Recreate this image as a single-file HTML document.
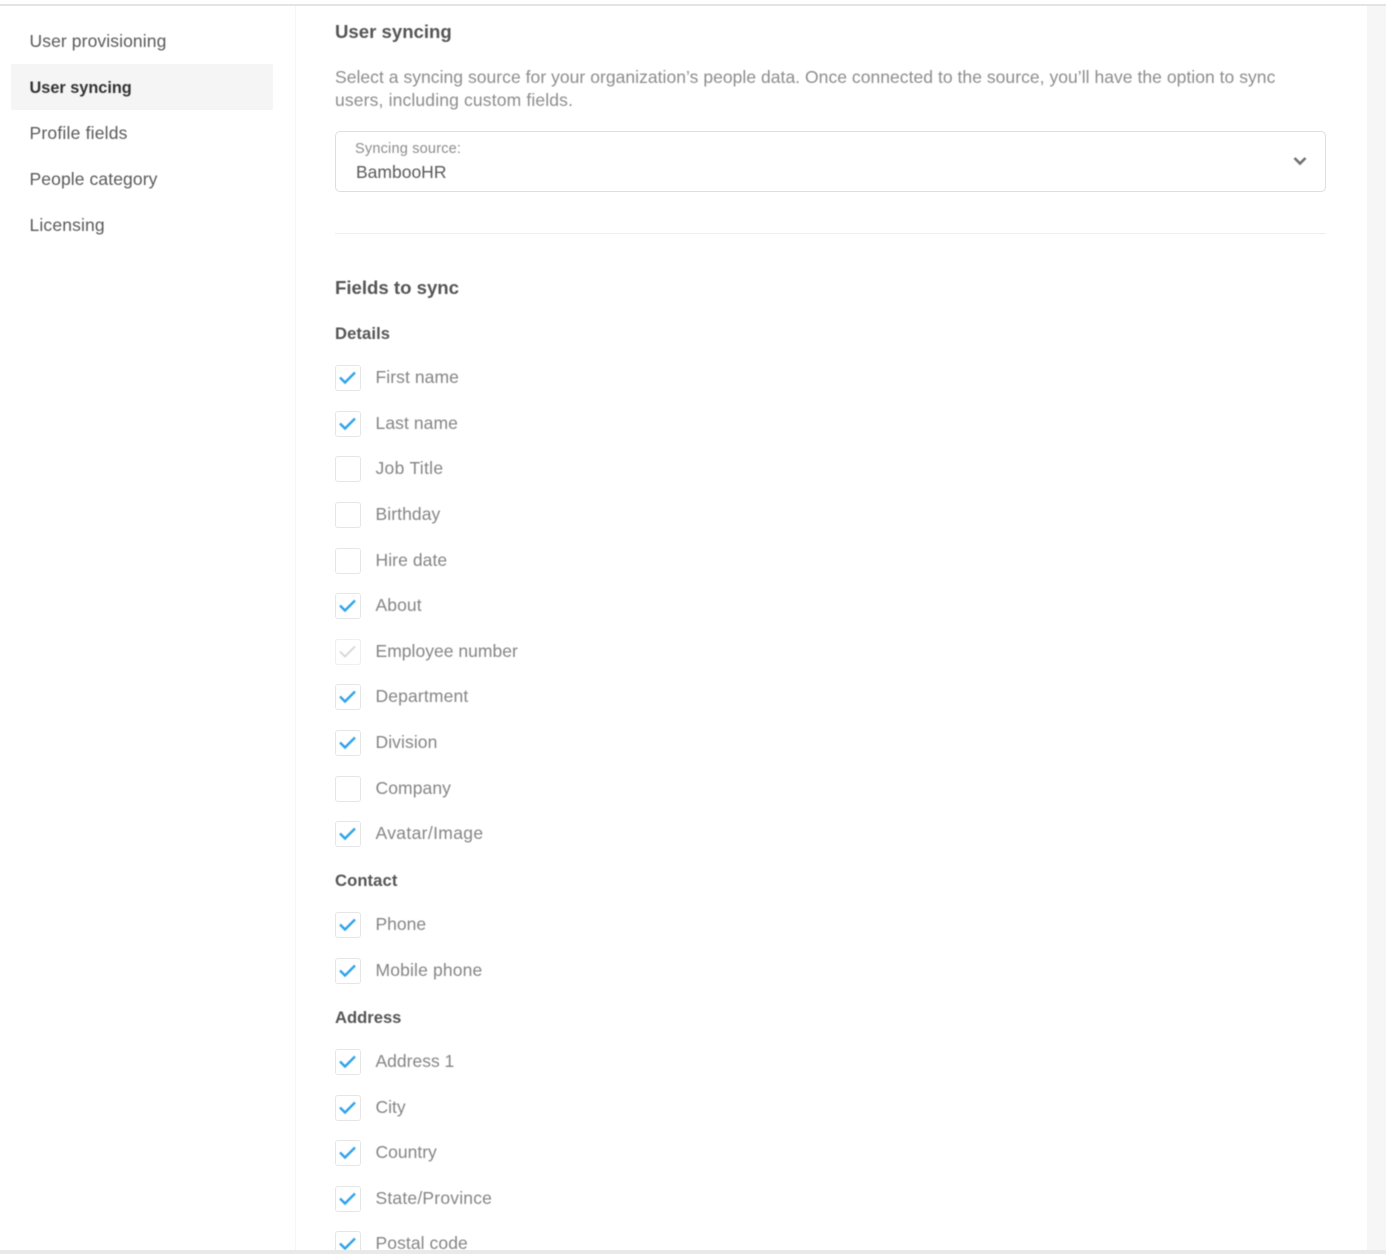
<!DOCTYPE html>
<html><head><meta charset="utf-8"><style>
html,body{margin:0;padding:0;background:#fff}
#p{position:relative;width:1386px;height:1258px;overflow:hidden;background:#fff;font-family:"Liberation Sans",sans-serif}
.a{position:absolute}
.t{position:absolute;white-space:nowrap;line-height:24px;filter:blur(.5px)}
.n{left:29.5px;font-size:17.5px;color:#5a5a5a;letter-spacing:.1px}
.l{left:375.5px;font-size:17.5px;color:#858585;letter-spacing:.08px}
.h{left:335px;font-size:18.6px;font-weight:bold;color:#555}
.s{left:335px;font-size:16.6px;font-weight:bold;color:#555}
.c{position:absolute;left:335px;width:24px;height:24px;border:1px solid #e6e6e6;border-radius:3px;background:#fff;box-sizing:content-box}
.c svg{position:absolute;left:-1px;top:-1px;width:24px;height:24px;filter:blur(.4px)}
.c path{fill:none;stroke:#2ea3ec;stroke-width:2.4}
.c.d path{stroke:#d4d4d4;stroke-width:1.8}
.c.d{border-color:#efefef}
</style></head><body><div id="p">
<div class="a" style="left:1367px;top:5px;width:19px;height:1245px;background:#f6f6f6"></div>
<div class="a" style="left:0;top:4px;width:1386px;height:2px;background:#e4e4e4"></div>
<div class="a" style="left:295px;top:6px;width:1px;height:1244px;background:#f5f5f5"></div>
<div class="a" style="left:0;top:1250px;width:1386px;height:4px;background:#e9e9e9;z-index:5"></div>
<div class="a" style="left:0;top:1254px;width:1386px;height:4px;background:#fff;z-index:5"></div>

<div class="a" style="left:11px;top:64px;width:262px;height:46px;background:#f5f5f5;border-radius:2px"></div>
<div class="t n" style="top:29px">User provisioning</div>
<div class="t n" style="top:75.5px;font-weight:bold;color:#333;font-size:16.3px;letter-spacing:0">User syncing</div>
<div class="t n" style="top:120.5px;letter-spacing:.2px">Profile fields</div>
<div class="t n" style="top:166.5px;letter-spacing:.1px">People category</div>
<div class="t n" style="top:212.5px;letter-spacing:.15px">Licensing</div>

<div class="t h" style="top:20px">User syncing</div>
<div class="t" style="left:335px;top:64.5px;font-size:17.5px;color:#8d8d8d;letter-spacing:.04px">Select a syncing source for your organization’s people data. Once connected to the source, you’ll have the option to sync</div>
<div class="t" style="left:335px;top:87.5px;font-size:17.5px;color:#8d8d8d;letter-spacing:.15px">users, including custom fields.</div>

<div class="a" style="left:335px;top:131px;width:989px;height:59px;border:1px solid #dedede;border-radius:5px"></div>
<div class="t" style="left:355px;top:137px;font-size:14.5px;color:#8d8d8d;letter-spacing:.2px">Syncing source:</div>
<div class="t" style="left:356px;top:160px;font-size:17.5px;color:#5a5a5a">BambooHR</div>
<svg class="a" style="left:1292px;top:155px;filter:blur(.4px)" width="16" height="12" viewBox="0 0 16 12"><path d="M2.5 3 L8 8.5 L13.5 3" fill="none" stroke="#707070" stroke-width="2.6"/></svg>
<div class="a" style="left:335px;top:233px;width:991px;height:1px;background:#eeeeee"></div>

<div class="t h" style="top:275.5px">Fields to sync</div>
<div class="t s" style="top:322px;letter-spacing:.1px">Details</div>
<div class="t s" style="top:869px;letter-spacing:.1px">Contact</div>
<div class="t s" style="top:1006px">Address</div>

<div class="c" style="top:365px"><svg viewBox="0 0 24 24"><path d="M5 12.5 L10 17.5 L20 7.5"/></svg></div><div class="t l" style="top:365px">First name</div>
<div class="c" style="top:411px"><svg viewBox="0 0 24 24"><path d="M5 12.5 L10 17.5 L20 7.5"/></svg></div><div class="t l" style="top:411px">Last name</div>
<div class="c" style="top:456px"></div><div class="t l" style="top:456px;letter-spacing:.3px">Job Title</div>
<div class="c" style="top:502px"></div><div class="t l" style="top:502px">Birthday</div>
<div class="c" style="top:548px"></div><div class="t l" style="top:548px">Hire date</div>
<div class="c" style="top:593px"><svg viewBox="0 0 24 24"><path d="M5 12.5 L10 17.5 L20 7.5"/></svg></div><div class="t l" style="top:593px">About</div>
<div class="c d" style="top:639px"><svg viewBox="0 0 24 24"><path d="M5 12.5 L10 17.5 L20 7.5"/></svg></div><div class="t l" style="top:639px;letter-spacing:.02px">Employee number</div>
<div class="c" style="top:684px"><svg viewBox="0 0 24 24"><path d="M5 12.5 L10 17.5 L20 7.5"/></svg></div><div class="t l" style="top:684px;letter-spacing:.15px">Department</div>
<div class="c" style="top:730px"><svg viewBox="0 0 24 24"><path d="M5 12.5 L10 17.5 L20 7.5"/></svg></div><div class="t l" style="top:730px">Division</div>
<div class="c" style="top:776px"></div><div class="t l" style="top:776px">Company</div>
<div class="c" style="top:821px"><svg viewBox="0 0 24 24"><path d="M5 12.5 L10 17.5 L20 7.5"/></svg></div><div class="t l" style="top:821px;letter-spacing:.35px">Avatar/Image</div>
<div class="c" style="top:912px"><svg viewBox="0 0 24 24"><path d="M5 12.5 L10 17.5 L20 7.5"/></svg></div><div class="t l" style="top:912px;letter-spacing:0">Phone</div>
<div class="c" style="top:958px"><svg viewBox="0 0 24 24"><path d="M5 12.5 L10 17.5 L20 7.5"/></svg></div><div class="t l" style="top:958px;letter-spacing:.15px">Mobile phone</div>
<div class="c" style="top:1049px"><svg viewBox="0 0 24 24"><path d="M5 12.5 L10 17.5 L20 7.5"/></svg></div><div class="t l" style="top:1049px;letter-spacing:0">Address 1</div>
<div class="c" style="top:1095px"><svg viewBox="0 0 24 24"><path d="M5 12.5 L10 17.5 L20 7.5"/></svg></div><div class="t l" style="top:1095px;letter-spacing:0">City</div>
<div class="c" style="top:1140px"><svg viewBox="0 0 24 24"><path d="M5 12.5 L10 17.5 L20 7.5"/></svg></div><div class="t l" style="top:1140px;letter-spacing:0">Country</div>
<div class="c" style="top:1186px"><svg viewBox="0 0 24 24"><path d="M5 12.5 L10 17.5 L20 7.5"/></svg></div><div class="t l" style="top:1186px;letter-spacing:.2px">State/Province</div>
<div class="c" style="top:1231px"><svg viewBox="0 0 24 24"><path d="M5 12.5 L10 17.5 L20 7.5"/></svg></div><div class="t l" style="top:1231px">Postal code</div>
</div></body></html>
